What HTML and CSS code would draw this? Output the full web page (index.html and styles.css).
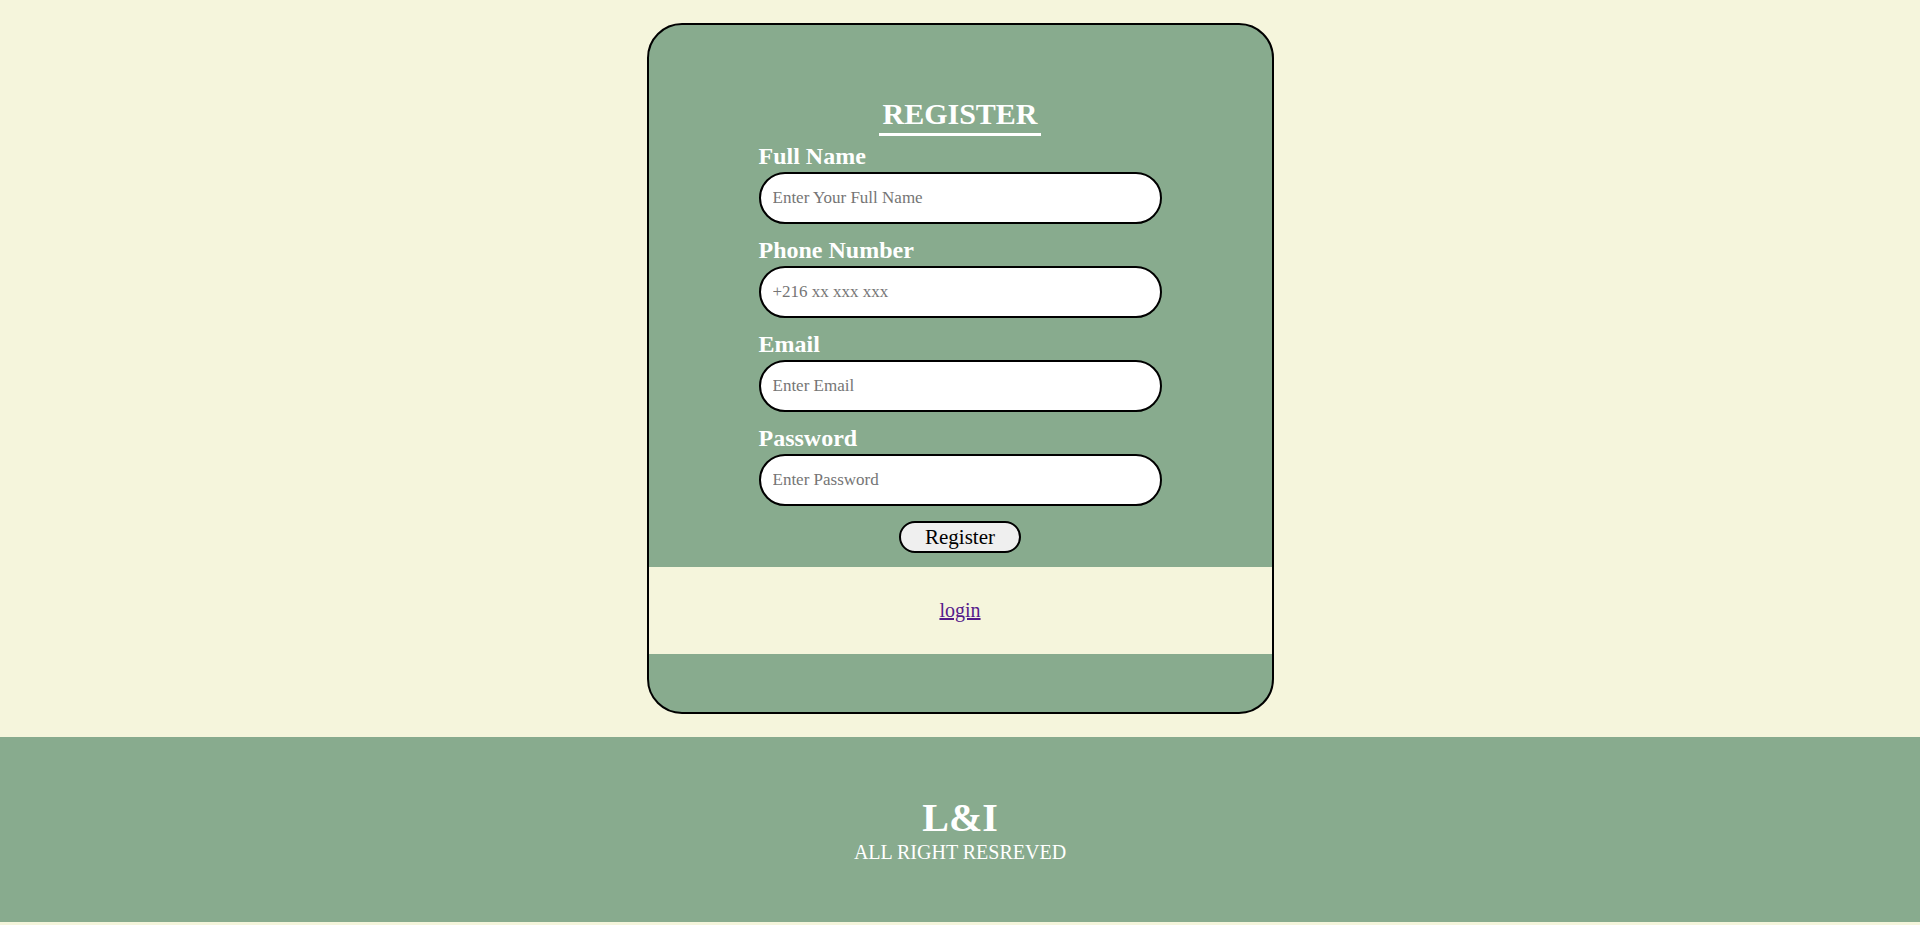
FILE: index.html
```html
<!DOCTYPE html>
<html lang="en">
<head>
<meta charset="utf-8">
<title>Register</title>
<link rel="stylesheet" href="styles.css">
</head>
<body>
<main class="page">
  <div class="card">
    <form class="form-section">
      <h1 class="title">REGISTER</h1>
      <div class="fields">
        <label class="field-label" for="fullname">Full Name</label>
        <input class="field-input" id="fullname" type="text" placeholder="Enter Your Full Name">
        <label class="field-label" for="phone">Phone Number</label>
        <input class="field-input" id="phone" type="tel" placeholder="+216 xx xxx xxx">
        <label class="field-label" for="email">Email</label>
        <input class="field-input" id="email" type="email" placeholder="Enter Email">
        <label class="field-label" for="password">Password</label>
        <input class="field-input" id="password" type="password" placeholder="Enter Password">
      </div>
      <button class="submit-btn" type="button">Register</button>
    </form>
    <div class="login-band">
      <a class="login-link" href="#login">login</a>
    </div>
    <div class="card-bottom"></div>
  </div>
</main>
<footer class="site-footer">
  <div class="brand">L&amp;I</div>
  <div class="rights">ALL RIGHT RESREVED</div>
</footer>
</body>
</html>
```
FILE: styles.css
```css
* {
  box-sizing: border-box;
}

body {
  margin: 0;
  background: #f5f5dc;
  font-family: "Liberation Serif", "Times New Roman", serif;
}

.page {
  display: flex;
  justify-content: center;
  padding: 23px 0 23px;
}

.card {
  width: 627px;
  border: 2px solid #000;
  border-radius: 35px;
  overflow: hidden;
  background: #88ab8e;
}

.form-section {
  display: flex;
  flex-direction: column;
  align-items: center;
  padding: 72px 0 14px;
  margin: 0;
}

.title {
  margin: 0;
  padding: 0 3px 3px;
  font-size: 30px;
  line-height: 33px;
  font-weight: bold;
  color: #fff;
  border-bottom: 3px solid #fff;
}

.fields {
  width: 403px;
  display: flex;
  flex-direction: column;
  margin-top: 6px;
}

.field-label {
  font-size: 24px;
  line-height: 28px;
  font-weight: bold;
  color: #fff;
}

.field-input {
  width: 403px;
  height: 52px;
  margin: 2px 0 12px;
  padding: 0 12px;
  border: 2px solid #000;
  border-radius: 26px;
  background: #fff;
  font-family: "Liberation Serif", "Times New Roman", serif;
  font-size: 17px;
  color: #000;
  outline: none;
}

.field-input::placeholder {
  color: #757575;
}

.submit-btn {
  margin-top: 3px;
  padding: 2px 24px;
  border: 2px solid #000;
  border-radius: 20px;
  background: #efefef;
  font-family: "Liberation Serif", "Times New Roman", serif;
  font-size: 21px;
  line-height: 24px;
  color: #000;
}

.login-band {
  background: #f5f5dc;
  padding: 32px 0;
  text-align: center;
  font-size: 20px;
  line-height: 23px;
}

.login-link {
  color: #551a8b;
  text-decoration: underline;
}

.card-bottom {
  height: 58px;
}

.site-footer {
  background: #88ab8e;
  color: #fff;
  text-align: center;
  padding: 58px 0 58px;
}

.brand {
  font-size: 40px;
  line-height: 46px;
  font-weight: bold;
}

.rights {
  font-size: 20px;
  line-height: 23px;
}
```
